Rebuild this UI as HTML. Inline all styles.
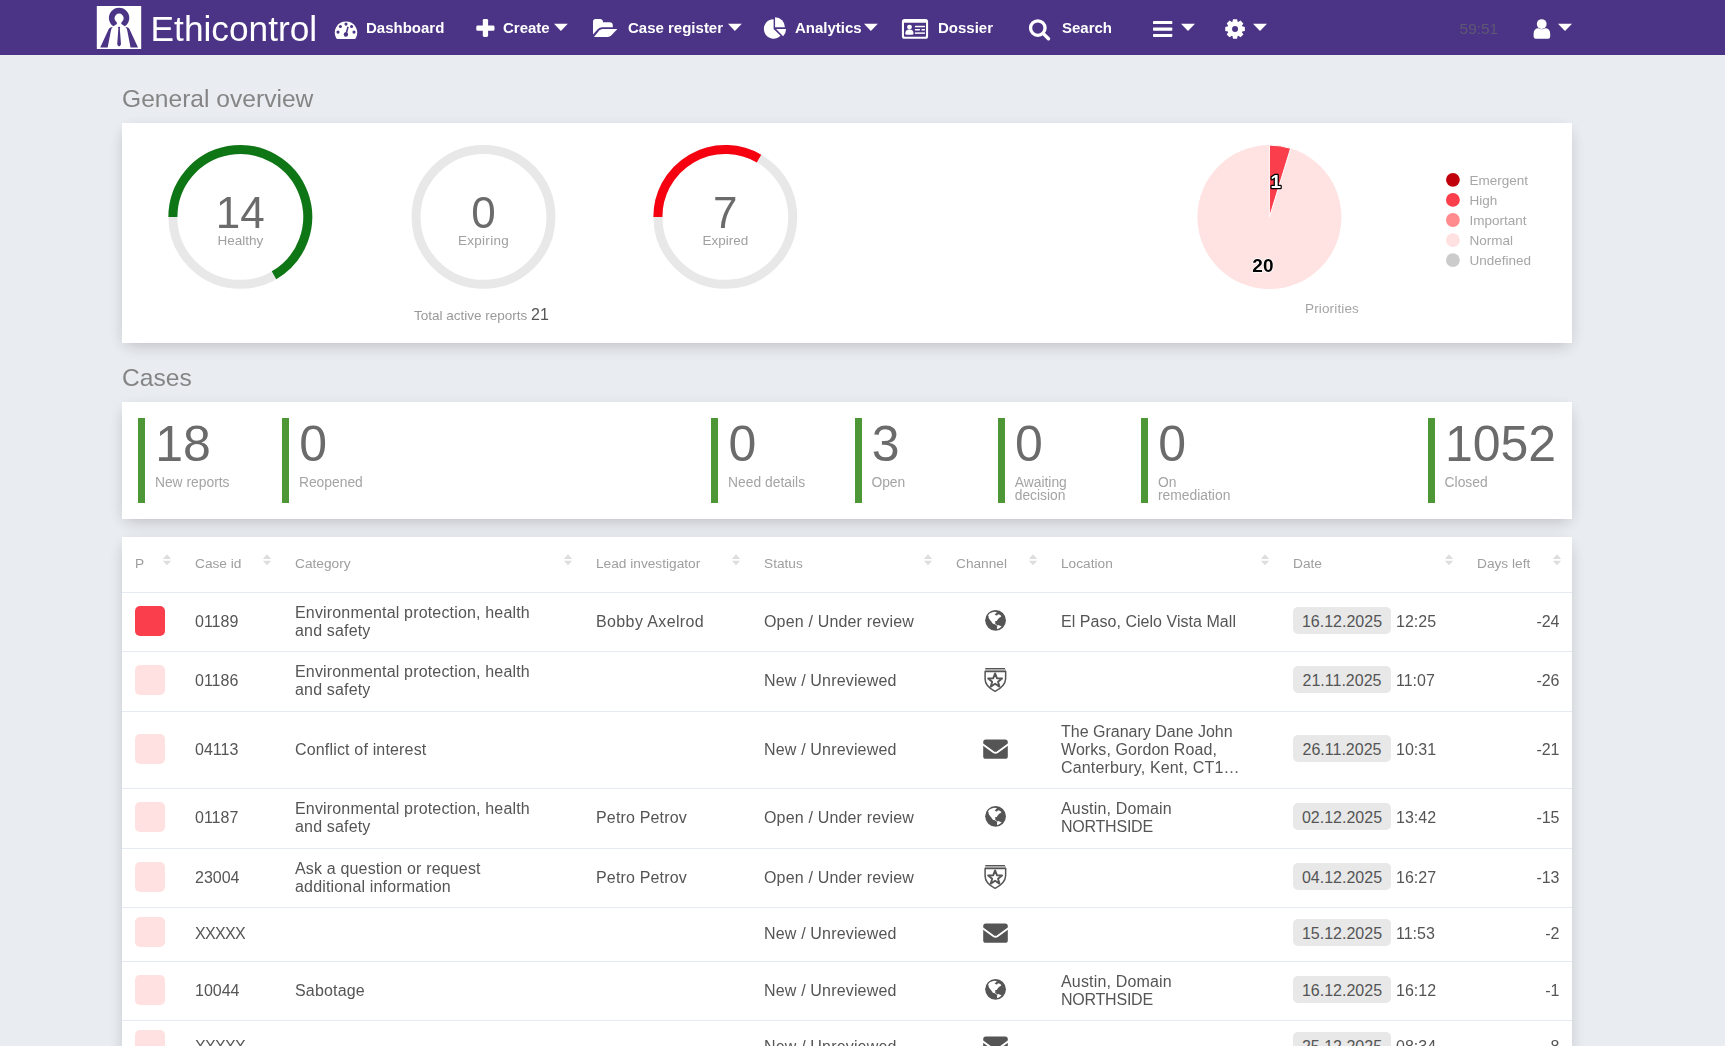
<!DOCTYPE html>
<html>
<head>
<meta charset="utf-8">
<title>Ethicontrol</title>
<style>
*{box-sizing:border-box;margin:0;padding:0}
html,body{width:1725px;height:1046px;overflow:hidden}
body{opacity:0.999;background:#e9ecf1;font-family:"Liberation Sans",sans-serif;color:#555;position:relative}
.nav{position:absolute;left:0;top:0;width:1725px;height:55px;background:#4b3485;will-change:transform}
.nav .it{position:absolute;top:0;height:55px;line-height:55px;color:#fff;font-weight:bold;font-size:15px;white-space:nowrap}
.nav svg{position:absolute}
.caret{position:absolute;width:0;height:0;border-left:6.5px solid transparent;border-right:6.5px solid transparent;border-top:7px solid #fff;top:24px}
h2{position:absolute;left:122px;font-weight:normal;font-size:24.6px;color:#858585;line-height:30px;white-space:nowrap}
.card{position:absolute;left:122px;width:1450px;background:#fff;box-shadow:0 5px 16px -3px rgba(0,0,0,0.22)}

.gn{position:absolute;width:120px;text-align:center;top:65px;font-size:44px;line-height:50px;color:#6b6b6b}
.gl{position:absolute;width:120px;text-align:center;top:109px;font-size:13.5px;line-height:18px;color:#a0a0a0}
.sm{position:absolute;font-size:13.5px;color:#999;white-space:nowrap}
.lg{position:absolute;left:1347.5px;font-size:13.5px;line-height:20px;color:#a6a6a6;white-space:nowrap}

.ci{position:absolute;top:16px;height:85px;width:140px;border-left:7px solid #4d9736;padding-left:10.5px}
.cn{font-size:50px;line-height:50px;color:#6b6b6b;margin-top:1px;margin-left:-0.3px;white-space:nowrap}
.cl{font-size:13.85px;line-height:13.2px;color:#a4a4a4;margin-top:6.6px;margin-left:-0.6px;white-space:nowrap}

.th{position:absolute;top:17.6px;font-size:13.7px;line-height:18px;color:#9e9e9e;white-space:nowrap}
.so{position:absolute;top:17.2px;width:10px;height:12px}
.ln{position:absolute;left:0;width:1450px;height:1px;background:#e6eaf2}
.tr{position:absolute;left:0;width:1450px}
.c{position:absolute;top:0;height:100%;display:flex;align-items:center;font-size:16px;line-height:18px;color:#555;white-space:nowrap}
.c.t{letter-spacing:0.17px}
.pr{display:block;width:30px;height:30px;border-radius:5px;margin-bottom:2.8px}
.bd{display:inline-block;position:relative;z-index:0;height:26px;line-height:26px;width:98px;text-align:center;margin-right:5px}
.bd::before{content:"";position:absolute;left:0;top:-1.7px;width:98px;height:26.4px;background:#e8e8e8;border-radius:5px;z-index:-1}
.s1 .c{padding-bottom:1.4px}
.s2 .c.t,.s2 .c.n{padding-bottom:1px}
</style>
</head>
<body>
<!--NAV-->
<div class="nav">
<svg width="1725" height="55" viewBox="0 0 1725 55" style="left:0;top:0" fill="#fff">
<!-- logo -->
<rect x="96.8" y="6" width="44.4" height="43" fill="#fff"/>
<g transform="translate(92,2) scale(0.049727)" fill="#4b3485">
<path d="M430,490 A205,205 0 1 1 660,490 L590,440 Q575,425 612,388 A92,92 0 1 0 478,388 Q515,425 500,440 Z"/>
<path d="M165,915 L330,560 Q352,503 418,503 Q388,525 380,580 L315,915 Z"/>
<path d="M925,915 L760,560 Q738,503 672,503 Q702,525 710,580 L775,915 Z"/>
<path d="M523,505 Q545,495 567,505 L560,540 L583,850 Q570,890 545,895 Q520,890 507,850 L530,540 Z"/>
</g>
<!-- tachometer -->
<path d="M337.6,38.9 Q336.6,38.9 336.1,38 A11.25,11.25 0 1 1 355.9,38 Q355.4,38.9 354.4,38.9 Z"/>
<g fill="#4b3485"><circle cx="338" cy="32.1" r="1.55"/><circle cx="340.4" cy="26.5" r="1.55"/><circle cx="346" cy="24.1" r="1.55"/><circle cx="351.6" cy="26.5" r="1.55"/><circle cx="354" cy="32.1" r="1.55"/><circle cx="345.9" cy="34.5" r="2.2"/><path d="M345.9,34.5 L347.9,27.4" stroke="#4b3485" stroke-width="1.6" stroke-linecap="round" fill="none"/></g>
<!-- plus -->
<rect x="482.8" y="18.9" width="5.3" height="18" rx="1.4"/><rect x="476.3" y="25.5" width="18.2" height="5.3" rx="1.4"/>
<!-- folder open -->
<g transform="translate(588,12)">
<path d="M5,9.6 Q5,6.9 7.7,6.9 L12,6.9 Q14.8,6.9 15.1,10.2 L21.6,10.2 Q24.8,10.2 24.8,13.4 L24.8,15.2 L14.3,15.2 Q11.5,15.2 9.7,17.3 L5,22.4 Z"/>
<path d="M5.9,24.9 L11.2,18.4 Q12.6,16.9 14.6,16.9 L29.4,16.9 L23.4,23.3 Q21.8,24.9 19.8,24.9 Z"/>
</g>
<!-- pie chart -->
<g transform="translate(758,12)">
<path d="M15.63,16.92 L15.63,7.17 A9.75,9.75 0 1 0 22.52,23.81 Z"/>
<path d="M17.07,15.2 L17.07,5.3 A9.9,9.9 0 0 1 26.97,15.2 Z"/>
<path d="M18.07,17.07 L28.07,17.07 A10,10 0 0 1 25.14,24.14 Z"/>
</g>
<!-- id card -->
<g transform="translate(896,12)">
<path fill-rule="evenodd" d="M5.9,9.5 Q5.9,6.9 8.5,6.9 L29.5,6.9 Q32.1,6.9 32.1,9.5 L32.1,24.2 Q32.1,26.8 29.5,26.8 L8.5,26.8 Q5.9,26.8 5.9,24.2 Z M8,10.8 L8,24 Q8,24.8 8.8,24.8 L29.2,24.8 Q30,24.8 30,24 L30,10.8 Z"/>
<circle cx="13.5" cy="15.1" r="2.45"/>
<path d="M9.3,21.3 Q9.3,17.5 13.4,17.5 Q17.5,17.5 17.5,21.3 Q17.5,22.8 16,22.8 L10.8,22.8 Q9.3,22.8 9.3,21.3 Z"/>
<rect x="18.9" y="13.8" width="10.1" height="1.4" rx="0.5"/><rect x="18.9" y="17.1" width="5.1" height="1.4" rx="0.5"/><rect x="25.4" y="17.1" width="3.6" height="1.4" rx="0.5"/><rect x="18.9" y="20.2" width="10.1" height="1.75" rx="0.4" opacity="0.85"/>
</g>
<!-- search -->
<circle cx="1037.8" cy="28.05" r="7.25" fill="none" stroke="#fff" stroke-width="3.3"/>
<path d="M1043.6,33.9 L1048.5,38.8" stroke="#fff" stroke-width="3.4" stroke-linecap="round"/>
<!-- bars -->
<rect x="1153" y="21" width="19.3" height="3.1" rx="0.7"/><rect x="1153" y="27.45" width="19.3" height="3.2" rx="0.7"/><rect x="1153" y="33.9" width="19.3" height="3" rx="0.7"/>
<!-- gear -->
<path fill-rule="evenodd" d="M1232.44,21.80 L1233.04,19.14 L1237.04,19.14 L1237.64,21.80 L1238.25,22.05 L1240.55,20.60 L1243.38,23.43 L1241.93,25.73 L1242.18,26.34 L1244.84,26.94 L1244.84,30.94 L1242.18,31.54 L1241.93,32.15 L1243.38,34.45 L1240.55,37.28 L1238.25,35.83 L1237.64,36.08 L1237.04,38.74 L1233.04,38.74 L1232.44,36.08 L1231.83,35.83 L1229.53,37.28 L1226.70,34.45 L1228.15,32.15 L1227.90,31.54 L1225.24,30.94 L1225.24,26.94 L1227.90,26.34 L1228.15,25.73 L1226.70,23.43 L1229.53,20.60 L1231.83,22.05Z M1238.04,28.94 A3,3 0 1 0 1232.04,28.94 A3,3 0 1 0 1238.04,28.94Z"/>
<!-- user -->
<circle cx="1541.7" cy="24.05" r="4.9"/>
<path d="M1533.6,34 Q1533.6,28.2 1538.6,28.2 Q1541.8,30.4 1545,28.2 Q1550.2,28.2 1550.2,34 L1550.2,36.6 Q1550.2,38.8 1548,38.8 L1535.8,38.8 Q1533.6,38.8 1533.6,36.6 Z"/>
<!-- carets -->
<path d="M554,23.8 L567.8,23.8 L560.9,31 Z"/>
<path d="M728,23.8 L741.8,23.8 L734.9,31 Z"/>
<path d="M864,23.8 L877.8,23.8 L870.9,31 Z"/>
<path d="M1181,23.8 L1195,23.8 L1188,31 Z"/>
<path d="M1253,23.8 L1267,23.8 L1260,31 Z"/>
<path d="M1558,23.8 L1572,23.8 L1565,31 Z"/>
<text x="150.6" y="40.8" font-family="Liberation Sans, sans-serif" font-size="35.5" textLength="166.6" lengthAdjust="spacingAndGlyphs" fill="#fff">Ethicontrol</text>
</svg>
<div class="it" style="left:366px">Dashboard</div>
<div class="it" style="left:503px">Create</div>
<div class="it" style="left:628px">Case register</div>
<div class="it" style="left:795px">Analytics</div>
<div class="it" style="left:938px">Dossier</div>
<div class="it" style="left:1062px">Search</div>
<div class="it" style="left:1459.6px;top:1px;font-size:15.4px;font-weight:normal;color:#5d5873">59:51</div>
</div>
<h2 style="top:84px">General overview</h2>
<div class="card" id="ov" style="top:123px;height:220px">
<svg width="1450" height="220" viewBox="0 0 1450 220" style="position:absolute;left:0;top:0">
<g fill="none" stroke-width="9">
<circle cx="118.3" cy="93.9" r="67.4" stroke="#e8e8e8"/>
<path d="M50.90,93.90 A67.4,67.4 0 1 1 152.00,152.27" stroke="#0e7614"/>
<circle cx="361.5" cy="93.9" r="67.4" stroke="#e8e8e8"/>
<circle cx="603.3" cy="93.9" r="67.4" stroke="#e8e8e8"/>
<path d="M535.90,93.90 A67.4,67.4 0 0 1 637.00,35.53" stroke="#f50010"/>
</g>
<circle cx="1147.4" cy="94.1" r="72" fill="#ffe2e2"/>
<path d="M1147.40,94.10 L1147.40,22.10 A72,72 0 0 1 1168.62,25.30 Z" fill="#fb3e4c" stroke="#fff" stroke-width="1" stroke-linejoin="round"/>
<g font-family="Liberation Sans, sans-serif" font-weight="bold" font-size="19" text-anchor="middle" fill="#000" stroke="#fff" stroke-width="2.2" paint-order="stroke" stroke-linejoin="round">
<text x="1153.7" y="65.2" fill="#fff" stroke="#000" stroke-width="2.6">1</text>
<text x="1140.9" y="148.9" stroke-width="1.6">20</text>
</g>
<g>
<circle cx="1330.9" cy="56.8" r="6.9" fill="#c0000c"/>
<circle cx="1330.9" cy="76.9" r="6.9" fill="#fb3e4c"/>
<circle cx="1330.9" cy="97.0" r="6.9" fill="#ff8b8f"/>
<circle cx="1330.9" cy="117.1" r="6.9" fill="#ffe1e1"/>
<circle cx="1330.9" cy="137.2" r="6.9" fill="#cbcbcb"/>
</g>
</svg>
<div class="gn" style="left:58.3px">14</div><div class="gl" style="left:58.3px">Healthy</div>
<div class="gn" style="left:301.5px">0</div><div class="gl" style="left:301.5px;letter-spacing:0.3px">Expiring</div>
<div class="gn" style="left:543.3px">7</div><div class="gl" style="left:543.3px">Expired</div>
<div class="sm" style="left:292px;top:182px;line-height:20px">Total active reports <span style="font-size:16px;color:#555">21</span></div>
<div class="sm" style="left:1183px;top:176px;line-height:20px;color:#a6a6a6;letter-spacing:0.15px">Priorities</div>
<div class="lg" style="top:48px">Emergent</div>
<div class="lg" style="top:68px">High</div>
<div class="lg" style="top:88px">Important</div>
<div class="lg" style="top:108px">Normal</div>
<div class="lg" style="top:128px">Undefined</div>
</div>
<h2 style="top:363px">Cases</h2>
<div class="card" id="cs" style="top:402px;height:117px">
<div class="ci" style="left:16.0px"><div class="cn">18</div><div class="cl">New reports</div></div>
<div class="ci" style="left:160px"><div class="cn">0</div><div class="cl">Reopened</div></div>
<div class="ci" style="left:589.2px"><div class="cn">0</div><div class="cl">Need details</div></div>
<div class="ci" style="left:732.5px"><div class="cn">3</div><div class="cl">Open</div></div>
<div class="ci" style="left:875.8px"><div class="cn">0</div><div class="cl">Awaiting<br>decision</div></div>
<div class="ci" style="left:1019.1px"><div class="cn">0</div><div class="cl">On<br>remediation</div></div>
<div class="ci" style="left:1305.7px"><div class="cn">1052</div><div class="cl">Closed</div></div>
</div>
<div class="card" id="tb" style="top:537px;height:520px;overflow:hidden">
<svg width="0" height="0" style="position:absolute"><defs>
<symbol id="globe" viewBox="0 0 30 30"><circle cx="15.55" cy="15.3" r="10.4" fill="#555"/><path transform="scale(0.02868)" d="M280,370 L330,300 L430,250 L520,235 L590,250 L560,290 L510,330 L570,365 L610,355 L620,320 L690,340 L745,380 L720,420 L660,450 L610,510 L585,560 L545,562 L525,575 L540,600 L520,640 L560,675 L600,715 L640,700 L700,720 L755,745 L700,790 L640,830 L598,838 L588,790 L603,745 L560,700 L520,668 L450,655 L400,580 L330,500 L300,440 L300,400 Z" fill="#fff"/></symbol>
<symbol id="shield" viewBox="0 0 30 30"><rect x="5.3" y="4" width="19.7" height="1.4" fill="#555"/><rect x="4.9" y="5.4" width="21.1" height="1.5" fill="#aaa"/><path d="M5.1,7.5 L25.7,7.5 L25.6,15 Q25.2,22.3 15.1,27.3 Q5,22.3 5.1,15 Z" fill="none" stroke="#555" stroke-width="1.5" stroke-linejoin="round"/><polygon points="15.10,9.40 16.92,14.19 22.04,14.44 18.05,17.66 19.39,22.61 15.10,19.80 10.81,22.61 12.15,17.66 8.16,14.44 13.28,14.19" fill="none" stroke="#555" stroke-width="1.9" stroke-linejoin="round"/></symbol>
<symbol id="env" viewBox="0 0 34 30"><rect x="5.2" y="5.5" width="24.6" height="19.3" rx="2.6" fill="#555"/><path d="M3.6,9.6 L15.6,18.2 Q17.5,19.4 19.4,18.2 L31.4,9.6" fill="none" stroke="#fff" stroke-width="1.9"/></symbol>
<symbol id="sort" viewBox="0 0 10 12"><path d="M5,0.3 L9.2,5 L0.8,5 Z M0.8,6.7 L9.2,6.7 L5,11.3 Z" fill="#dedede"/></symbol>
</defs></svg>
<div class="th" style="left:13px">P</div><svg class="so" style="left:40.0px"><use href="#sort"/></svg>
<div class="th" style="left:73px">Case id</div><svg class="so" style="left:140.0px"><use href="#sort"/></svg>
<div class="th" style="left:173px">Category</div><svg class="so" style="left:441.0px"><use href="#sort"/></svg>
<div class="th" style="left:474px">Lead investigator</div><svg class="so" style="left:609.0px"><use href="#sort"/></svg>
<div class="th" style="left:642px">Status</div><svg class="so" style="left:801.0px"><use href="#sort"/></svg>
<div class="th" style="left:834px">Channel</div><svg class="so" style="left:906.0px"><use href="#sort"/></svg>
<div class="th" style="left:939px">Location</div><svg class="so" style="left:1138.0px"><use href="#sort"/></svg>
<div class="th" style="left:1171px">Date</div><svg class="so" style="left:1322.0px"><use href="#sort"/></svg>
<div class="th" style="left:1355px">Days left</div><svg class="so" style="left:1429.5px"><use href="#sort"/></svg>
<div class="ln" style="top:55px"></div>
<div class="tr" style="top:56px;height:58px"><div class="c" style="left:13px"><i class="pr" style="background:#fb3e4c"></i></div><div class="c n" style="left:73px">01189</div><div class="c t" style="left:173px">Environmental protection, health<br>and safety</div><div class="c t" style="left:474px;letter-spacing:0.38px">Bobby Axelrod</div><div class="c t" style="left:642px">Open / Under review</div><div class="c" style="left:858px"><svg width="30" height="30" style="display:block;margin-bottom:4.2px"><use href="#globe"/></svg></div><div class="c t" style="left:939px;letter-spacing:0.04px"><div>El Paso, Cielo Vista Mall</div></div><div class="c n" style="left:1171px"><span class="bd">16.12.2025</span><span class="tm">12:25</span></div><div class="c n" style="right:12.5px">-24</div></div>
<div class="ln" style="top:114px"></div>
<div class="tr s2" style="top:115px;height:59px"><div class="c" style="left:13px"><i class="pr" style="background:#ffe1e1"></i></div><div class="c n" style="left:73px">01186</div><div class="c t" style="left:173px">Environmental protection, health<br>and safety</div><div class="c t" style="left:642px">New / Unreviewed</div><div class="c" style="left:858px"><svg width="30" height="30" style="display:block;margin-bottom:4.2px"><use href="#shield"/></svg></div><div class="c n" style="left:1171px"><span class="bd">21.11.2025</span><span class="tm">11:07</span></div><div class="c n" style="right:12.5px">-26</div></div>
<div class="ln" style="top:174px"></div>
<div class="tr" style="top:175px;height:76px"><div class="c" style="left:13px"><i class="pr" style="background:#ffe1e1"></i></div><div class="c n" style="left:73px">04113</div><div class="c t" style="left:173px">Conflict of interest</div><div class="c t" style="left:642px">New / Unreviewed</div><div class="c" style="left:856px"><svg width="34" height="30" style="display:block;margin-bottom:2.6px"><use href="#env"/></svg></div><div class="c t" style="left:939px"><div><span style="letter-spacing:0">The Granary Dane John</span><br><span style="letter-spacing:0.08px">Works, Gordon Road,</span><br>Canterbury, Kent, CT1…</div></div><div class="c n" style="left:1171px"><span class="bd">26.11.2025</span><span class="tm">10:31</span></div><div class="c n" style="right:12.5px">-21</div></div>
<div class="ln" style="top:251px"></div>
<div class="tr s2" style="top:252px;height:59px"><div class="c" style="left:13px"><i class="pr" style="background:#ffe1e1"></i></div><div class="c n" style="left:73px">01187</div><div class="c t" style="left:173px">Environmental protection, health<br>and safety</div><div class="c t" style="left:474px">Petro Petrov</div><div class="c t" style="left:642px">Open / Under review</div><div class="c" style="left:858px"><svg width="30" height="30" style="display:block;margin-bottom:4.2px"><use href="#globe"/></svg></div><div class="c t" style="left:939px"><div>Austin, Domain<br><span style="letter-spacing:-0.23px">NORTHSIDE</span></div></div><div class="c n" style="left:1171px"><span class="bd">02.12.2025</span><span class="tm">13:42</span></div><div class="c n" style="right:12.5px">-15</div></div>
<div class="ln" style="top:311px"></div>
<div class="tr" style="top:312px;height:58px"><div class="c" style="left:13px"><i class="pr" style="background:#ffe1e1"></i></div><div class="c n" style="left:73px">23004</div><div class="c t" style="left:173px">Ask a question or request<br>additional information</div><div class="c t" style="left:474px">Petro Petrov</div><div class="c t" style="left:642px">Open / Under review</div><div class="c" style="left:858px"><svg width="30" height="30" style="display:block;margin-bottom:4.2px"><use href="#shield"/></svg></div><div class="c n" style="left:1171px"><span class="bd">04.12.2025</span><span class="tm">16:27</span></div><div class="c n" style="right:12.5px">-13</div></div>
<div class="ln" style="top:370px"></div>
<div class="tr s1" style="top:371px;height:53px"><div class="c" style="left:13px"><i class="pr" style="background:#ffe1e1"></i></div><div class="c n" style="left:73px;letter-spacing:-0.7px">XXXXX</div><div class="c t" style="left:642px">New / Unreviewed</div><div class="c" style="left:856px"><svg width="34" height="30" style="display:block;margin-bottom:2.6px"><use href="#env"/></svg></div><div class="c n" style="left:1171px"><span class="bd">15.12.2025</span><span class="tm">11:53</span></div><div class="c n" style="right:12.5px">-2</div></div>
<div class="ln" style="top:424px"></div>
<div class="tr" style="top:425px;height:58px"><div class="c" style="left:13px"><i class="pr" style="background:#ffe1e1"></i></div><div class="c n" style="left:73px">10044</div><div class="c t" style="left:173px">Sabotage</div><div class="c t" style="left:642px">New / Unreviewed</div><div class="c" style="left:858px"><svg width="30" height="30" style="display:block;margin-bottom:4.2px"><use href="#globe"/></svg></div><div class="c t" style="left:939px"><div>Austin, Domain<br><span style="letter-spacing:-0.23px">NORTHSIDE</span></div></div><div class="c n" style="left:1171px"><span class="bd">16.12.2025</span><span class="tm">16:12</span></div><div class="c n" style="right:12.5px">-1</div></div>
<div class="ln" style="top:483px"></div>
<div class="tr s1" style="top:484px;height:53px"><div class="c" style="left:13px"><i class="pr" style="background:#ffe1e1"></i></div><div class="c n" style="left:73px;letter-spacing:-0.7px">XXXXX</div><div class="c t" style="left:642px">New / Unreviewed</div><div class="c" style="left:856px"><svg width="34" height="30" style="display:block;margin-bottom:2.6px"><use href="#env"/></svg></div><div class="c n" style="left:1171px"><span class="bd">25.12.2025</span><span class="tm">08:34</span></div><div class="c n" style="right:12.5px">8</div></div>
</div>
</body>
</html>
